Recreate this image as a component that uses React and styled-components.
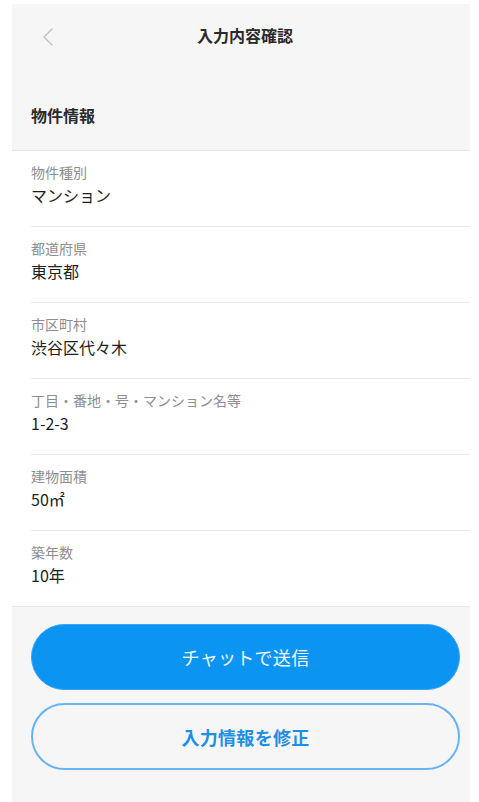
import React from "react";
import styled, { createGlobalStyle } from "styled-components";

const Global = createGlobalStyle`
  html, body { margin: 0; padding: 0; background: #ffffff; }
  body { font-family: "Noto Sans CJK JP", "Noto Sans", sans-serif; color: #222; }
  * { box-sizing: border-box; }
`;

const Screen = styled.div`
  margin: 4px 9px 0 12px;
  background: #f6f6f6;
  display: flex;
  flex-direction: column;
`;

const NavBar = styled.div`
  position: relative;
  height: 61px;
  padding-left: 8px;
  display: flex;
  align-items: center;
  justify-content: center;
`;

const BackButton = styled.button`
  position: absolute;
  left: 28px;
  top: 22px;
  width: 16px;
  height: 22px;
  padding: 0;
  border: none;
  background: transparent;
  display: flex;
  align-items: center;
  justify-content: center;
`;

const Title = styled.h1`
  margin: 0;
  font-size: 16px;
  line-height: 22px;
  font-weight: 700;
  color: #2a2a2a;
`;

const SectionHead = styled.div`
  height: 86px;
  padding: 39px 0 0 19px;
  border-bottom: 1px solid #e6e6e6;
  font-size: 16px;
  line-height: 22px;
  font-weight: 700;
  color: #2a2a2a;
`;

const List = styled.div`
  background: #ffffff;
  padding-left: 19px;
  display: flex;
  flex-direction: column;
`;

const Row = styled.div`
  height: ${(p) => (p.$last ? 75 : 76)}px;
  padding-top: 12px;
  border-bottom: ${(p) => (p.$last ? "none" : "1px solid #e8e8e8")};
  display: flex;
  flex-direction: column;
  gap: 3px;
`;

const Label = styled.div`
  font-size: 14px;
  line-height: 18px;
  color: #8e8e8e;
`;

const Value = styled.div`
  font-size: 16px;
  line-height: 22px;
  color: #1e1e1e;
`;

const Footer = styled.div`
  border-top: 1px solid #e8e8e8;
  padding: 17px 10px 33px 19px;
  display: flex;
  flex-direction: column;
  gap: 13px;
`;

const PillButton = styled.button`
  height: ${(p) => (p.$outline ? 67 : 66)}px;
  border-radius: 34px;
  font-family: "Noto Sans CJK JP", "Noto Sans", sans-serif;
  font-size: 18px;
  letter-spacing: 0.3px;
  cursor: pointer;
  background: ${(p) => (p.$outline ? "transparent" : "#0c94f2")};
  color: ${(p) => (p.$outline ? "#1d8fe6" : "#f2f8ff")};
  border: ${(p) => (p.$outline ? "2px solid #68b3f4" : "1px solid #3aa6f4")};
  font-weight: ${(p) => (p.$outline ? 700 : 400)};
`;

const rows = [
  ["物件種別", "マンション"],
  ["都道府県", "東京都"],
  ["市区町村", "渋谷区代々木"],
  ["丁目・番地・号・マンション名等", "1-2-3"],
  ["建物面積", "50㎡"],
  ["築年数", "10年"],
];

export default function App() {
  return (
    <>
      <Global />
      <Screen>
        <NavBar>
          <BackButton aria-label="戻る">
            <svg width="12" height="18" viewBox="0 0 12 18">
              <polyline
                points="10,1 2,9 10,17"
                fill="none"
                stroke="#c4c4c4"
                strokeWidth="1.6"
                strokeLinecap="round"
                strokeLinejoin="round"
              />
            </svg>
          </BackButton>
          <Title>入力内容確認</Title>
        </NavBar>
        <SectionHead>物件情報</SectionHead>
        <List>
          {rows.map(([l, v], i) => (
            <Row key={l} $last={i === rows.length - 1}>
              <Label>{l}</Label>
              <Value>{v}</Value>
            </Row>
          ))}
        </List>
        <Footer>
          <PillButton>チャットで送信</PillButton>
          <PillButton $outline>入力情報を修正</PillButton>
        </Footer>
      </Screen>
    </>
  );
}
